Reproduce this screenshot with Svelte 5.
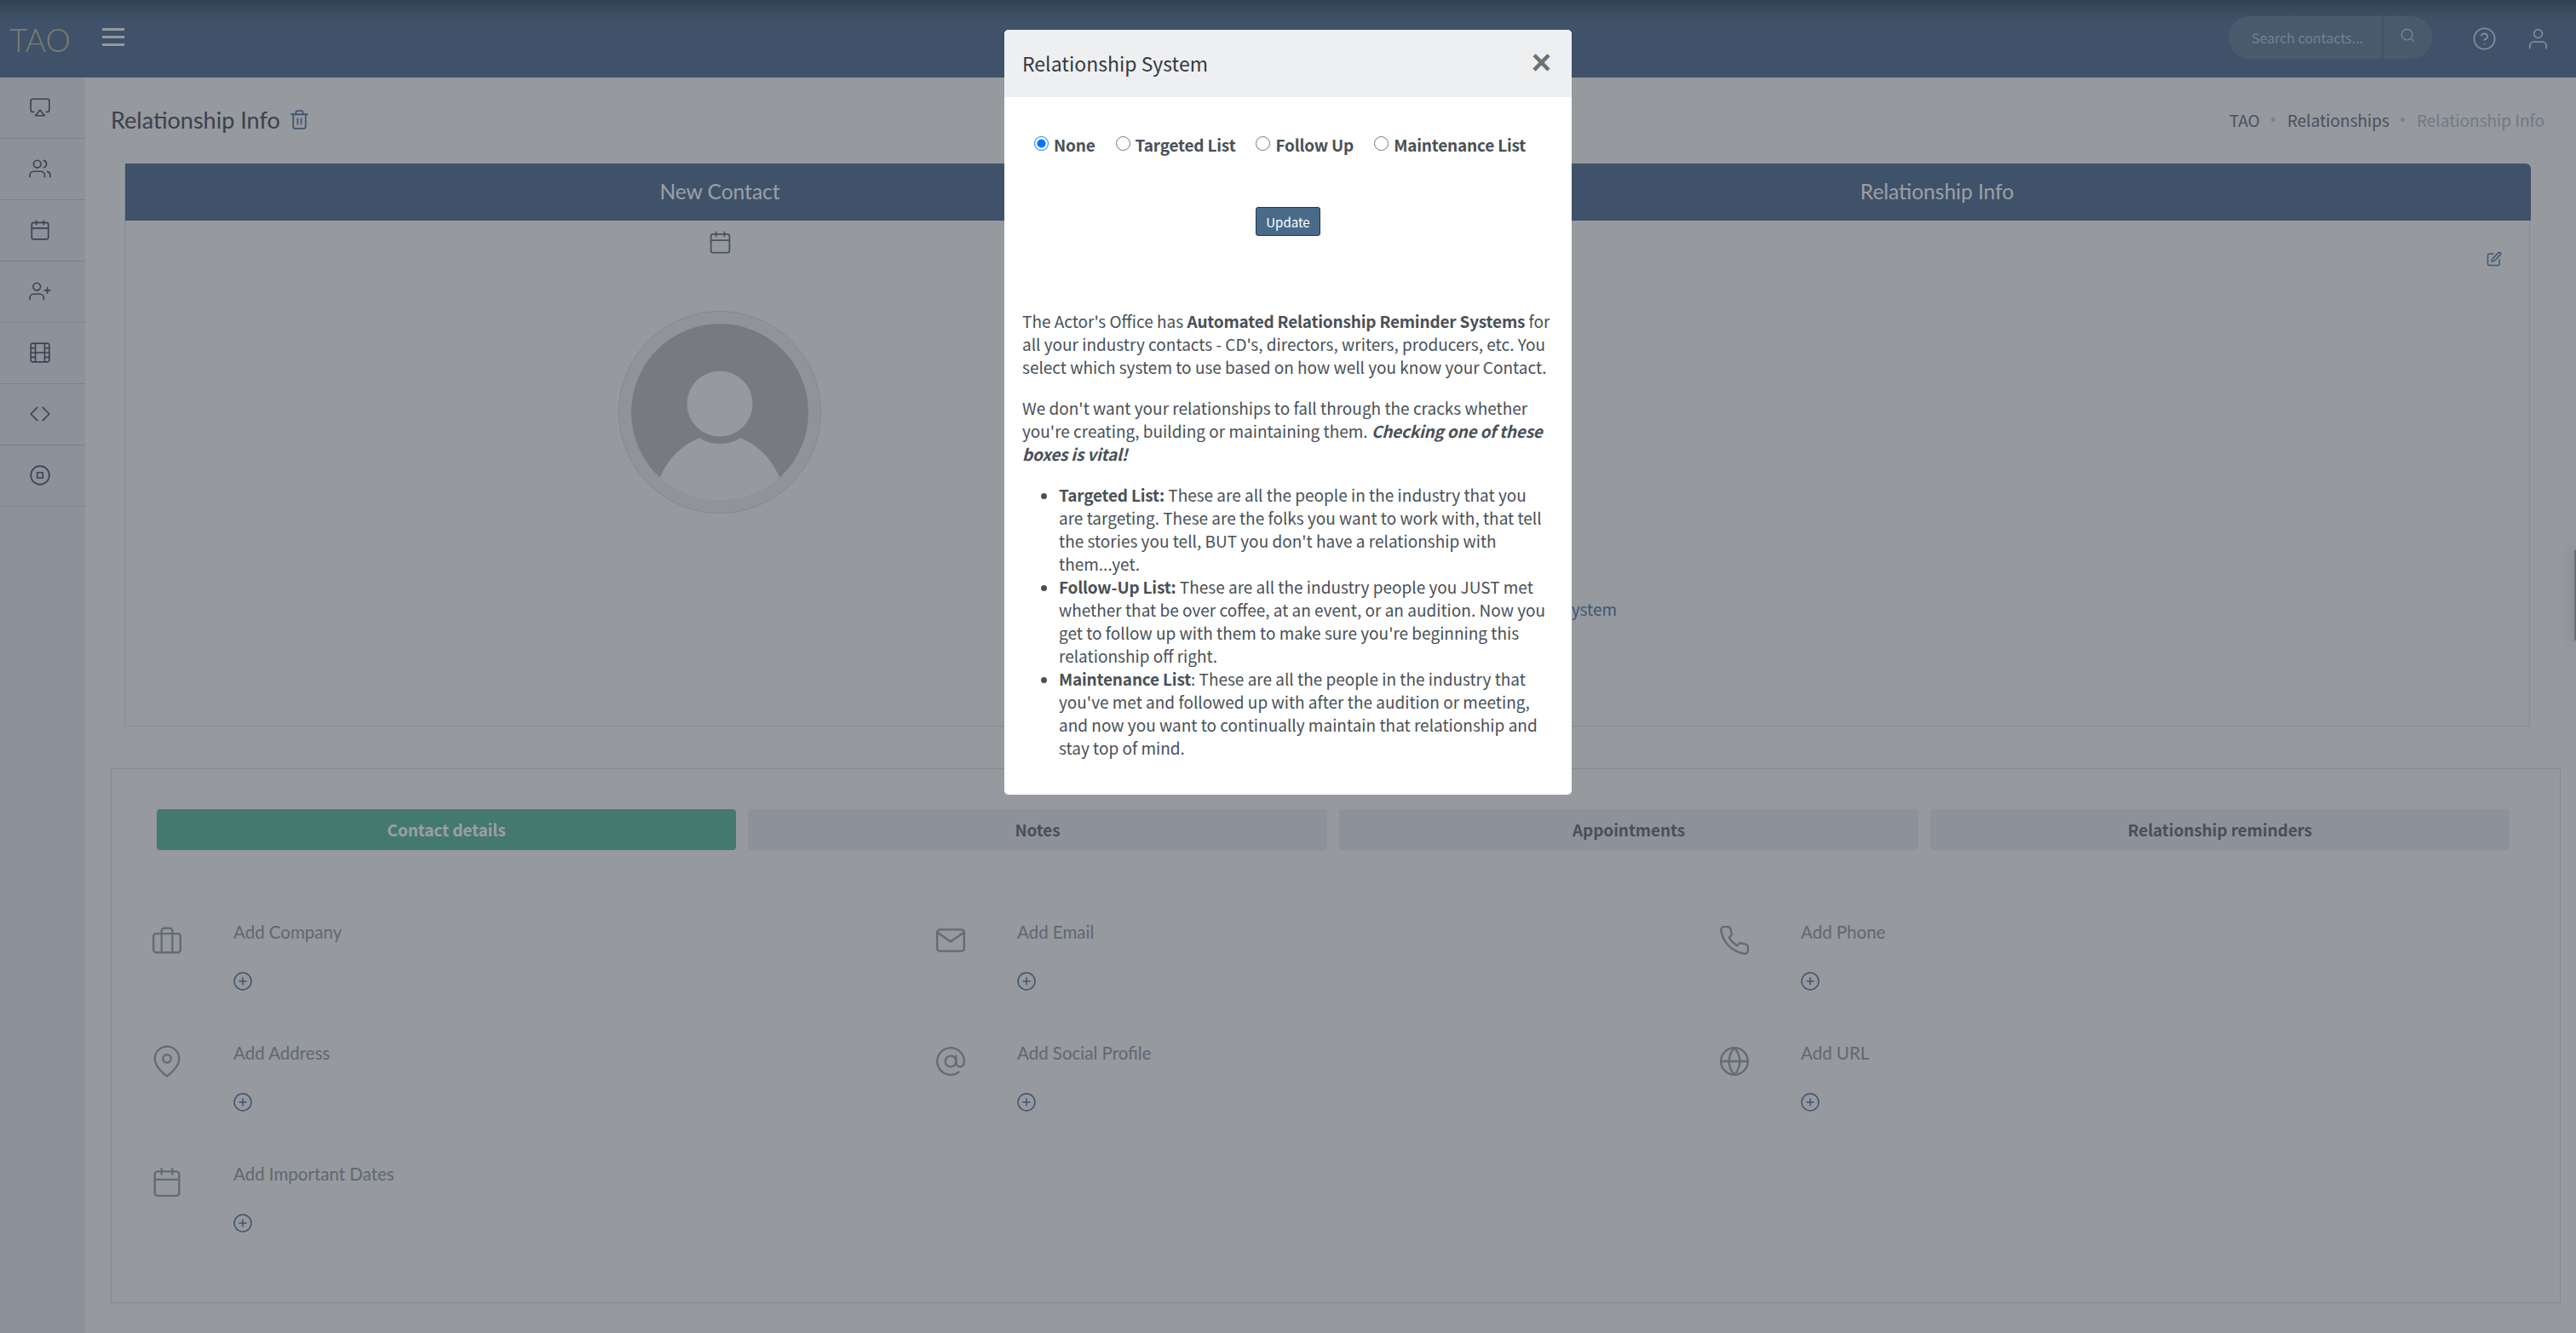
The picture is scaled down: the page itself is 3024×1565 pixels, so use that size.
<script>
  const icons = {
    airplay: '<path d="M5 17H4a2 2 0 0 1-2-2V5a2 2 0 0 1 2-2h16a2 2 0 0 1 2 2v10a2 2 0 0 1-2 2h-1"/><path d="M12 15l5 6H7z"/>',
    users: '<path d="M17 21v-2a4 4 0 0 0-4-4H5a4 4 0 0 0-4 4v2"/><circle cx="9" cy="7" r="4"/><path d="M23 21v-2a4 4 0 0 0-3-3.87"/><path d="M16 3.13a4 4 0 0 1 0 7.75"/>',
    calendar: '<rect x="3" y="4" width="18" height="18" rx="2"/><path d="M16 2v4M8 2v4M3 10h18"/>',
    userPlus: '<path d="M16 21v-2a4 4 0 0 0-4-4H5a4 4 0 0 0-4 4v2"/><circle cx="8.5" cy="7" r="4"/><path d="M20 8v6M23 11h-6"/>',
    film: '<rect x="2" y="2" width="20" height="20" rx="2.2"/><path d="M7 2v20M17 2v20M2 12h20M2 7h5M2 17h5M17 17h5M17 7h5"/>',
    code: '<path d="M9 5l-7 7 7 7"/><path d="M15 5l7 7-7 7"/>',
    target: '<circle cx="12" cy="12" r="10"/><rect x="9" y="9" width="6" height="6"/>',
    trash: '<path d="M3 6h18"/><path d="M19 6v14a2 2 0 0 1-2 2H7a2 2 0 0 1-2-2V6m3 0V4a2 2 0 0 1 2-2h4a2 2 0 0 1 2 2v2"/><path d="M10 11v6M14 11v6"/>',
    edit: '<path d="M11 4H4a2 2 0 0 0-2 2v14a2 2 0 0 0 2 2h14a2 2 0 0 0 2-2v-7"/><path d="M18.5 2.5a2.121 2.121 0 0 1 3 3L12 15l-4 1 1-4z"/>',
    search: '<circle cx="11" cy="11" r="8"/><path d="M21 21l-4.35-4.35"/>',
    help: '<circle cx="12" cy="12" r="10"/><path d="M9.09 9a3 3 0 0 1 5.83 1c0 2-3 3-3 3"/><path d="M12 17h.01"/>',
    user: '<path d="M20 21v-2a4 4 0 0 0-4-4H8a4 4 0 0 0-4 4v2"/><circle cx="12" cy="7" r="4"/>',
    briefcase: '<rect x="2" y="7" width="20" height="14" rx="2"/><path d="M16 21V5a2 2 0 0 0-2-2h-4a2 2 0 0 0-2 2v16"/>',
    mail: '<path d="M4 4h16a2 2 0 0 1 2 2v12a2 2 0 0 1-2 2H4a2 2 0 0 1-2-2V6a2 2 0 0 1 2-2z"/><path d="M22 6l-10 7L2 6"/>',
    phone: '<path d="M22 16.92v3a2 2 0 0 1-2.18 2 19.79 19.79 0 0 1-8.63-3.07 19.5 19.5 0 0 1-6-6 19.79 19.79 0 0 1-3.07-8.67A2 2 0 0 1 4.11 2h3a2 2 0 0 1 2 1.72 12.84 12.84 0 0 0 .7 2.81 2 2 0 0 1-.45 2.11L8.09 9.91a16 16 0 0 0 6 6l1.27-1.27a2 2 0 0 1 2.11-.45 12.84 12.84 0 0 0 2.81.7A2 2 0 0 1 22 16.92z"/>',
    pin: '<path d="M21 10c0 7-9 13-9 13s-9-6-9-13a9 9 0 0 1 18 0z"/><circle cx="12" cy="10" r="3"/>',
    at: '<circle cx="12" cy="12" r="4"/><path d="M16 8v5a3 3 0 0 0 6 0v-1a10 10 0 1 0-3.92 7.94"/>',
    globe: '<circle cx="12" cy="12" r="10"/><path d="M2 12h20"/><path d="M12 2a15.3 15.3 0 0 1 4 10 15.3 15.3 0 0 1-4 10 15.3 15.3 0 0 1-4-10 15.3 15.3 0 0 1 4-10z"/>',
    plus: '<circle cx="12" cy="12" r="10"/><path d="M12 8v8M8 12h8"/>'
  };

  const navItems = ['airplay', 'users', 'calendar', 'userPlus', 'film', 'code', 'target'];
  const tabs = ['Contact details', 'Notes', 'Appointments', 'Relationship reminders'];
  const details = [
    { icon: 'briefcase', label: 'Add Company' },
    { icon: 'mail', label: 'Add Email' },
    { icon: 'phone', label: 'Add Phone' },
    { icon: 'pin', label: 'Add Address' },
    { icon: 'at', label: 'Add Social Profile' },
    { icon: 'globe', label: 'Add URL' },
    { icon: 'calendar', label: 'Add Important Dates' }
  ];
  const systems = ['None', 'Targeted List', 'Follow Up', 'Maintenance List'];

  let system = $state('None');
  let activeTab = $state(0);
</script>

{#snippet icon(name, cls)}
  <svg class="icon {cls}" viewBox="0 0 24 24" aria-hidden="true">{@html icons[name]}</svg>
{/snippet}

<div class="page">
  <header class="topbar">
    <div class="logo">TAO</div>
    <button class="burger" aria-label="Menu"><span></span><span></span><span></span></button>
    <div class="topbar-right">
      <div class="search">
        <span class="search-text">Search contacts...</span>
        <span class="search-btn">{@render icon('search', 'top-sm')}</span>
      </div>
      <span class="top-icon">{@render icon('help', 'top-lg')}</span>
      <span class="top-icon">{@render icon('user', 'top-lg')}</span>
    </div>
  </header>

  <div class="body">
    <nav class="sidebar">
      {#each navItems as item}
        <div class="nav-item">{@render icon(item, 'nav')}</div>
      {/each}
    </nav>

    <main class="main">
      <div class="title-row">
        <h1>Relationship Info</h1>
        {@render icon('trash', 'trash')}
        <div class="crumbs">
          <span>TAO</span><i></i><span>Relationships</span><i></i><span class="current">Relationship Info</span>
        </div>
      </div>

      <section class="card">
        <div class="col">
          <div class="col-head">New Contact</div>
          <div class="col-left">
            {@render icon('calendar', 'cal')}
            <div class="avatar">
              <svg viewBox="0 0 208 208" aria-hidden="true">
                <circle cx="104" cy="104" r="104" class="av-bg" />
                <clipPath id="av-clip"><circle cx="104" cy="104" r="104" /></clipPath>
                <g clip-path="url(#av-clip)">
                  <ellipse cx="104" cy="220" rx="78" ry="90" class="av-fg" />
                  <circle cx="104" cy="94" r="47" class="av-bg" />
                  <circle cx="104" cy="94" r="38.5" class="av-fg" />
                </g>
              </svg>
            </div>
          </div>
        </div>
        <div class="col">
          <div class="col-head">Relationship Info</div>
          <div class="col-right">
            <div class="edit-row">{@render icon('edit', 'edit')}</div>
            <a class="sys-link" href="#system">Relationship System</a>
          </div>
        </div>
      </section>

      <section class="panel">
        <div class="tabs">
          {#each tabs as tab, i}
            <button class="tab" class:active={activeTab === i} onclick={() => (activeTab = i)}>{tab}</button>
          {/each}
        </div>
        <div class="details">
          {#each details as d}
            <div class="detail">
              <div class="detail-icon">{@render icon(d.icon, 'det')}</div>
              <div class="detail-text">
                <div class="detail-label">{d.label}</div>
                {@render icon('plus', 'plus')}
              </div>
            </div>
          {/each}
        </div>
      </section>
    </main>
  </div>

  <div class="handle"></div>

  <div class="backdrop">
    <div class="modal">
      <div class="modal-head">
        <h2>Relationship System</h2>
        <span class="close">×</span>
      </div>
      <div class="modal-body">
        <div class="radios">
          {#each systems as s}
            <label><input type="radio" name="system" value={s} bind:group={system} />{s}</label>
          {/each}
        </div>
        <div class="update-row"><button class="update">Update</button></div>
        <p>The Actor's Office has <b>Automated Relationship Reminder Systems</b> for all your industry contacts - CD's, directors, writers, producers, etc. You select which system to use based on how well you know your Contact.</p>
        <p>We don't want your relationships to fall through the cracks whether you're creating, building or maintaining them. <b><em>Checking one of these boxes is vital!</em></b></p>
        <ul>
          <li><b>Targeted List:</b> These are all the people in the industry that you are targeting. These are the folks you want to work with, that tell the stories you tell, BUT you don't have a relationship with them...yet.</li>
          <li><b>Follow-Up List:</b> These are all the industry people you JUST met whether that be over coffee, at an event, or an audition. Now you get to follow up with them to make sure you're beginning this relationship off right.</li>
          <li><b>Maintenance List</b>: These are all the people in the industry that you've met and followed up with after the audition or meeting, and now you want to continually maintain that relationship and stay top of mind.</li>
        </ul>
      </div>
    </div>
  </div>
</div>

<style>
  :global(body) {
    margin: 0;
    background: #f4f6f7;
  }

  .page {
    position: relative;
    width: 3024px;
    height: 1565px;
    overflow: hidden;
    background: #f4f6f7;
    font-family: "Noto Sans CJK SC", "Source Sans Pro", Lato, sans-serif;
    color: #737b8a;
  }

  .icon {
    display: block;
    fill: none;
    stroke: currentColor;
    stroke-width: 1.6;
    stroke-linecap: round;
    stroke-linejoin: round;
  }

  /* top bar */
  .topbar {
    display: flex;
    align-items: center;
    height: 91px;
    background: linear-gradient(#486077 0, #607d9c 24px);
  }

  .logo {
    width: 120px;
    padding-left: 11px;
    box-sizing: border-box;
    font: 300 37px/1 Lato, sans-serif;
    color: #c9c59c;
    margin-top: 2px;
  }

  .burger {
    display: flex;
    flex-direction: column;
    gap: 6px;
    width: 26px;
    padding: 0;
    border: 0;
    background: none;
    margin-top: -4px;
  }

  .burger span {
    height: 3px;
    background: #f5f7fa;
  }

  .topbar-right {
    display: flex;
    align-items: center;
    margin-left: auto;
    padding-right: 30px;
  }

  .search {
    display: flex;
    align-items: center;
    width: 239px;
    height: 50px;
    border-radius: 25px;
    background: #6f8b9f;
    margin-top: -4px;
  }

  .search-text {
    flex: 1;
    padding-left: 27px;
    font-size: 16px;
    color: #b8cee1;
  }

  .search-btn {
    display: flex;
    align-items: center;
    justify-content: center;
    width: 58px;
    height: 100%;
    border-left: 1px solid #5c7890;
    color: #cee3f7;
    box-sizing: border-box;
  }

  .top-sm {
    width: 19px;
    height: 19px;
    margin-top: -4px;
    stroke-width: 1.4;
  }

  .top-icon {
    display: block;
    margin-left: 47px;
    color: #cee3f7;
  }

  .top-icon + .top-icon {
    margin-left: 34px;
  }

  .top-lg {
    width: 29px;
    height: 29px;
    stroke-width: 1.5;
  }

  /* sidebar */
  .body {
    display: flex;
    height: 1474px;
  }

  .sidebar {
    flex: 0 0 100px;
    background: #e6e9ee;
  }

  .nav-item {
    display: flex;
    align-items: center;
    justify-content: center;
    height: 71px;
    padding-right: 6px;
    border-bottom: 1px solid #c9ced5;
    color: #566377;
  }

  .nav {
    width: 26px;
    height: 26px;
    margin-top: -2px;
    stroke-width: 1.5;
  }

  /* main area */
  .main {
    flex: 1;
    min-width: 0;
    padding: 0 37px 0 30px;
  }

  .title-row {
    display: flex;
    align-items: center;
    height: 98px;
    padding-bottom: 3px;
    gap: 10px;
  }

  h1 {
    margin: 0;
    font: 400 27px/1 Lato, sans-serif;
    color: #59606a;
  }

  .trash {
    width: 25px;
    height: 25px;
    color: #6086ad;
    stroke-width: 1.7;
  }

  .crumbs {
    display: flex;
    align-items: center;
    margin-left: auto;
    font-size: 19px;
    color: #737b8a;
  }

  .crumbs i {
    width: 5px;
    height: 5px;
    margin: 0 13.5px;
    border-radius: 50%;
    background: #c8cdd6;
  }

  .crumbs .current {
    color: #b8c0cf;
  }

  .card {
    display: grid;
    grid-template-columns: 1396px 1394px;
    column-gap: 34px;
    height: 661px;
    margin: 0 17px 0 16px;
    box-sizing: border-box;
    border: 1px solid #dadfe6;
    border-top: 0;
    border-radius: 6px 6px 0 0;
  }

  .col-head {
    display: flex;
    align-items: center;
    justify-content: center;
    height: 67px;
    padding-right: 34px;
    background: #607d9c;
    color: #fff;
    font: 400 24.5px/1 Lato, sans-serif;
    margin-right: -34px;
  }

  .col + .col .col-head {
    margin-left: -34px;
    margin-right: 0;
    padding-left: 34px;
    padding-right: 0;
    border-top-right-radius: 6px;
  }

  .col-left {
    display: flex;
    flex-direction: column;
    align-items: center;
  }

  .cal {
    width: 29px;
    height: 29px;
    margin-top: 11px;
    stroke-width: 1.5;
  }

  .avatar {
    width: 238px;
    height: 238px;
    margin-top: 66px;
    padding: 14px;
    box-sizing: border-box;
    border-radius: 50%;
    border: 1px solid #d6d9e0;
    background: #ecedf1;
  }

  .avatar svg {
    display: block;
    width: 100%;
    height: 100%;
  }

  .av-bg {
    fill: #c0c2c3;
  }

  .av-fg {
    fill: #f4f6f7;
  }

  .col-right {
    position: relative;
    height: 594px;
  }

  .edit-row {
    display: flex;
    justify-content: flex-end;
    padding: 36px 34px 0 0;
    color: #6086ad;
  }

  .edit {
    width: 18px;
    height: 18px;
    stroke-width: 2;
  }

  .sys-link {
    display: block;
    margin: 388px 0 0 141px;
    font-size: 19px;
    color: #6086ad;
    text-decoration: none;
  }

  /* lower panel */
  .panel {
    height: 628px;
    margin: 49px -19px 0 0;
    padding: 47px 41px 0 53px;
    box-sizing: border-box;
    border: 1px solid #dadfe6;
  }

  .tabs {
    display: grid;
    grid-template-columns: repeat(4, 680px);
    column-gap: 14px;
  }

  .tab {
    height: 48px;
    padding: 0 0 2px;
    border: 0;
    border-radius: 4px;
    background: #e6eaf0;
    color: #73787e;
    font: 600 19px/1 "Noto Sans CJK SC", "Source Sans Pro", Lato, sans-serif;
    letter-spacing: -0.1px;
  }

  .tab.active {
    background: #68c0a6;
    color: #fff;
  }

  .details {
    display: grid;
    grid-template-columns: repeat(3, 920px);
    grid-auto-rows: 142px;
    margin: 84px 0 0 -8px;
  }

  .detail {
    display: flex;
  }

  .detail-icon {
    flex: 0 0 98px;
    padding-top: 3px;
    color: #a0a8af;
  }

  .det {
    width: 40px;
    height: 38px;
    stroke-width: 1.5;
  }

  .detail-label {
    height: 26px;
    font: 400 20.5px/26px Lato, sans-serif;
    color: #9aa2a9;
    margin-top: -1px;
  }

  .plus {
    width: 24px;
    height: 24px;
    margin: 33px 0 0 -1px;
    color: #6080a4;
    stroke-width: 1.5;
  }

  .handle {
    position: absolute;
    top: 646px;
    right: 0;
    width: 2px;
    height: 106px;
    background: #a9acb3;
    box-shadow: 0 0 14px rgba(0, 0, 0, 0.5);
  }

  /* modal */
  .backdrop {
    position: absolute;
    inset: 0;
    z-index: 10;
    display: flex;
    justify-content: center;
    background: rgba(20, 25, 35, 0.42);
  }

  .modal {
    width: 666px;
    height: 898px;
    margin-top: 35px;
    border-radius: 5px;
    overflow: hidden;
    background: #fff;
    color: #495057;
  }

  .modal-head {
    display: flex;
    align-items: center;
    justify-content: space-between;
    height: 79px;
    padding: 0 24px 0 21px;
    background: #eeeff1;
  }

  h2 {
    margin: 0 0 2px;
    font-size: 23px;
    font-weight: 400;
    color: #343a40;
  }

  .close {
    font: 700 40px/1 "Liberation Sans", sans-serif;
    color: #6e7072;
    margin-top: -4px;
  }

  .modal-body {
    padding: 40px 21px 0;
    font-size: 19px;
    line-height: 27px;
  }

  .modal-body b {
    letter-spacing: -0.2px;
  }

  .radios {
    display: flex;
    gap: 24px;
    margin-top: -2px;
    padding-left: 14px;
    height: 34px;
    font-weight: 600;
    letter-spacing: -0.2px;
    align-items: center;
    white-space: nowrap;
  }

  .radios label {
    display: flex;
    align-items: center;
    gap: 6px;
  }

  .radios input {
    flex: none;
    width: 17px;
    height: 17px;
    margin: -2px 0 0;
  }

  .update-row {
    display: flex;
    justify-content: center;
    margin-top: 57px;
  }

  .update {
    width: 76px;
    height: 34px;
    padding: 0;
    border: 1px solid #24384e;
    border-radius: 3px;
    background: #4a6a8a;
    color: #fff;
    font: 400 15px/1 "Noto Sans CJK SC", "Source Sans Pro", Lato, sans-serif;
  }

  p {
    margin: 86px 0 21px;
  }

  p + p {
    margin-top: 0;
  }

  ul {
    margin: 0;
    padding-left: 43px;
  }
</style>
